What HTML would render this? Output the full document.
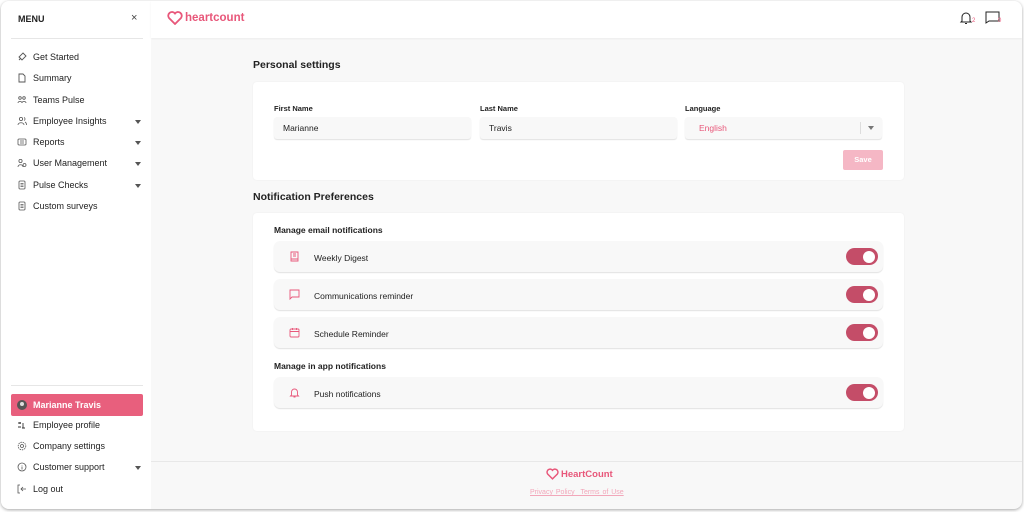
<!DOCTYPE html>
<html><head><style>
*{box-sizing:border-box;margin:0;padding:0}
body{width:1024px;height:512px;background:#fff;font-family:"Liberation Sans",sans-serif;color:#222;position:relative;overflow:hidden}
.win{position:absolute;left:1px;top:1px;width:1021px;height:508px;border-radius:8px;overflow:hidden;background:#f8f8f8;box-shadow:0 1px 3px rgba(0,0,0,.35)}
.side{position:absolute;left:0;top:0;width:150px;height:100%;background:#fff}
.a{position:absolute}
.menu{left:17px;top:13px;font-size:9px;font-weight:bold}
.x{left:130px;top:11px;font-size:11px;color:#444}
.hr{position:absolute;left:10px;width:132px;height:1px;background:#e6e6e6}
.it{position:absolute;left:16px;font-size:9px;color:#222;display:flex;align-items:center;gap:6px;width:126px}
.it svg{width:10px;height:10px;flex:none}
.car{position:absolute;right:2px;top:4px;width:0;height:0;border-left:3.5px solid transparent;border-right:3.5px solid transparent;border-top:4px solid #555}
.sel{position:absolute;left:10px;top:393px;width:132px;height:22px;background:#e85f7d;border-radius:2px;color:#fff;font-size:9px;font-weight:bold;display:flex;align-items:center;padding-left:6px;gap:6px}
.hdr{position:absolute;left:150px;top:0;right:0;height:37px;background:#fff;box-shadow:0 1px 2px rgba(0,0,0,.05)}
.logo{color:#e8577a;font-weight:bold;font-size:11.5px;display:flex;align-items:center;gap:2px}
h2{position:absolute;font-size:10.5px;font-weight:bold;color:#222}
.card{position:absolute;left:252px;width:651px;background:#fff;border-radius:4px;box-shadow:0 0 2px rgba(0,0,0,.05)}
.lbl{position:absolute;font-size:7.5px;font-weight:bold}
.inp{position:absolute;top:35px;height:22px;width:197px;background:#f8f8f8;border-radius:3px;box-shadow:0 1px 1px rgba(0,0,0,.12);font-size:8.5px;padding:6px 0 0 9px}
.row{position:absolute;left:21px;width:609px;height:31px;background:#f8f8f8;border-radius:6px;box-shadow:0 1px 1px rgba(0,0,0,.12);font-size:8.5px;display:flex;align-items:center;padding-left:40px;padding-top:2px}
.row svg{position:absolute;left:15px;top:10px;width:11px;height:11px}
.tg{position:absolute;right:5px;top:7px;width:32px;height:17px;border-radius:9px;background:#c44d68}
.tg:after{content:"";position:absolute;right:3px;top:2.5px;width:12px;height:12px;border-radius:50%;background:#fff}
.sub{position:absolute;left:21px;font-size:8.5px;font-weight:bold}
</style></head><body>
<div class="win">
<div class="side">
<div class="a menu">MENU</div><div class="a x">×</div>
<div class="hr" style="top:37px"></div>
<div class="it" style="top:51px"><svg viewBox="0 0 10 10" fill="none" stroke="#555" stroke-width=".9"><path d="M2 8l2-2M6 1l3 3-4 4-3-3z"/></svg>Get Started</div>
<div class="it" style="top:72px"><svg viewBox="0 0 10 10" fill="none" stroke="#555" stroke-width=".9"><path d="M2 1h4l2 2v6H2z"/></svg>Summary</div>
<div class="it" style="top:94px"><svg viewBox="0 0 10 10" fill="none" stroke="#555" stroke-width=".8"><circle cx="3" cy="3" r="1.3"/><circle cx="7" cy="3" r="1.3"/><path d="M1 8c0-2 4-2 4 0M5 8c0-2 4-2 4 0"/></svg>Teams Pulse</div>
<div class="it" style="top:115px"><svg viewBox="0 0 10 10" fill="none" stroke="#555" stroke-width=".8"><circle cx="4" cy="3" r="1.6"/><path d="M1 9c0-3 6-3 6 0M7 1.5a1.6 1.6 0 010 3M8 6c1 .5 1.5 1.5 1.5 3"/></svg>Employee Insights<span class="car"></span></div>
<div class="it" style="top:136px"><svg viewBox="0 0 10 10" fill="none" stroke="#555" stroke-width=".8"><rect x="1" y="2" width="8" height="6" rx="1"/><path d="M3 4h4M3 6h4"/></svg>Reports<span class="car"></span></div>
<div class="it" style="top:157px"><svg viewBox="0 0 10 10" fill="none" stroke="#555" stroke-width=".8"><circle cx="3.5" cy="3" r="1.6"/><path d="M1 9c0-3 5-3 5 0"/><circle cx="7.5" cy="7" r="1.5"/></svg>User Management<span class="car"></span></div>
<div class="it" style="top:179px"><svg viewBox="0 0 10 10" fill="none" stroke="#555" stroke-width=".8"><rect x="2" y="1" width="6" height="8" rx="1"/><path d="M3.5 3.5h3M3.5 5h3M3.5 6.5h3"/></svg>Pulse Checks<span class="car"></span></div>
<div class="it" style="top:200px"><svg viewBox="0 0 10 10" fill="none" stroke="#555" stroke-width=".8"><rect x="2" y="1" width="6" height="8" rx="1"/><path d="M3.5 3.5h3M3.5 5h3M3.5 6.5h3"/></svg>Custom surveys</div>
<div class="hr" style="top:384px"></div>
<div class="sel"><svg width="10" height="10" viewBox="0 0 10 10"><circle cx="5" cy="5" r="5" fill="#555"/><circle cx="5" cy="4" r="2" fill="#ddd"/></svg>Marianne Travis</div>
<div class="it" style="top:419px"><svg viewBox="0 0 10 10" fill="none" stroke="#333" stroke-width=".9"><path d="M1 3h3M3 2v2M1 7h3M6 3v5M5 8h3"/></svg>Employee profile</div>
<div class="it" style="top:440px"><svg viewBox="0 0 10 10" fill="none" stroke="#555" stroke-width=".8"><circle cx="5" cy="5" r="1.5"/><circle cx="5" cy="5" r="3.8" stroke-dasharray="1.5 .8"/></svg>Company settings</div>
<div class="it" style="top:461px"><svg viewBox="0 0 10 10" fill="none" stroke="#555" stroke-width=".8"><circle cx="5" cy="5" r="4"/><path d="M5 4.5v3M5 3v.5"/></svg>Customer support<span class="car"></span></div>
<div class="it" style="top:483px"><svg viewBox="0 0 10 10" fill="none" stroke="#555" stroke-width=".8"><path d="M3 1H1v8h2M4 5h5M6 3l-2 2 2 2"/></svg>Log out</div>
</div>
<div class="hdr">
<div class="a logo" style="left:16px;top:10px"><svg width="16" height="14" viewBox="0 0 16 14" fill="none" stroke="#e8577a" stroke-width="1.8"><path d="M8 13L2 7a3.3 3.3 0 016-4.5A3.3 3.3 0 0114 7z"/></svg>heartcount</div>
<svg class="a" style="left:808px;top:10px" width="14" height="14" viewBox="0 0 14 14" fill="none" stroke="#222" stroke-width="1"><path d="M3 10V6a4 4 0 018 0v4l1 1H2zM6 12.5h2"/></svg>
<div class="a" style="left:821px;top:17px;font-size:6px;color:#e8577a">2</div>
<svg class="a" style="left:834px;top:10px" width="15" height="13" viewBox="0 0 15 13" fill="none" stroke="#222" stroke-width="1"><path d="M1 1h13v9H4l-3 2z"/></svg>
<div class="a" style="left:847px;top:17px;font-size:6px;color:#e8577a">0</div>
</div>
<h2 style="left:252px;top:58px">Personal settings</h2>
<div class="card" style="top:81px;height:98px">
<div class="lbl" style="left:21px;top:22px">First Name</div>
<div class="lbl" style="left:227px;top:22px">Last Name</div>
<div class="lbl" style="left:432px;top:22px">Language</div>
<div class="inp" style="left:21px">Marianne</div>
<div class="inp" style="left:227px">Travis</div>
<div class="inp" style="left:432px;color:#e8577a;padding-left:14px">English<span style="position:absolute;left:175px;top:5px;width:1px;height:12px;background:#ddd"></span><span class="car" style="right:8px;top:9px;border-top-color:#777"></span></div>
<div class="a" style="left:590px;top:68px;width:40px;height:20px;background:#f5b7c5;border-radius:2px;color:#fff;font-size:7.5px;font-weight:bold;text-align:center;line-height:20px">Save</div>
</div>
<h2 style="left:252px;top:190px">Notification Preferences</h2>
<div class="card" style="top:212px;height:218px">
<div class="sub" style="top:12px">Manage email notifications</div>
<div class="row" style="top:28px"><svg viewBox="0 0 11 11" fill="none" stroke="#e8577a" stroke-width=".9"><path d="M2 1h7v9H2zM4 3h3M4 5h3M2 8h7"/></svg>Weekly Digest<span class="tg"></span></div>
<div class="row" style="top:66px"><svg viewBox="0 0 11 11" fill="none" stroke="#e8577a" stroke-width=".9"><path d="M1 1h9v7H3l-2 2z"/></svg>Communications reminder<span class="tg"></span></div>
<div class="row" style="top:104px"><svg viewBox="0 0 11 11" fill="none" stroke="#e8577a" stroke-width=".9"><rect x="1" y="2" width="9" height="8" rx="1"/><path d="M1 4.5h9M3.5 1v2M7.5 1v2"/></svg>Schedule Reminder<span class="tg"></span></div>
<div class="sub" style="top:148px">Manage in app notifications</div>
<div class="row" style="top:164px"><svg viewBox="0 0 11 11" fill="none" stroke="#e8577a" stroke-width=".9"><path d="M2.5 8V5a3 3 0 016 0v3l1 1h-8zM4.5 10h2"/></svg>Push notifications<span class="tg"></span></div>
</div>
<div class="a" style="left:150px;right:0;top:460px;height:1px;background:#e8e8e8"></div>
<div class="a logo" style="left:545px;top:467px;font-size:9.5px"><svg width="13" height="12" viewBox="0 0 16 14" fill="none" stroke="#e8577a" stroke-width="1.8"><path d="M8 13L2 7a3.3 3.3 0 016-4.5A3.3 3.3 0 0114 7z"/></svg>HeartCount</div>
<div class="a" style="left:529px;top:488px;font-size:7px;color:#f2a7ba;text-decoration:underline;word-spacing:1px">Privacy Policy&nbsp;&nbsp;Terms of Use</div>
</div>
</body></html>
